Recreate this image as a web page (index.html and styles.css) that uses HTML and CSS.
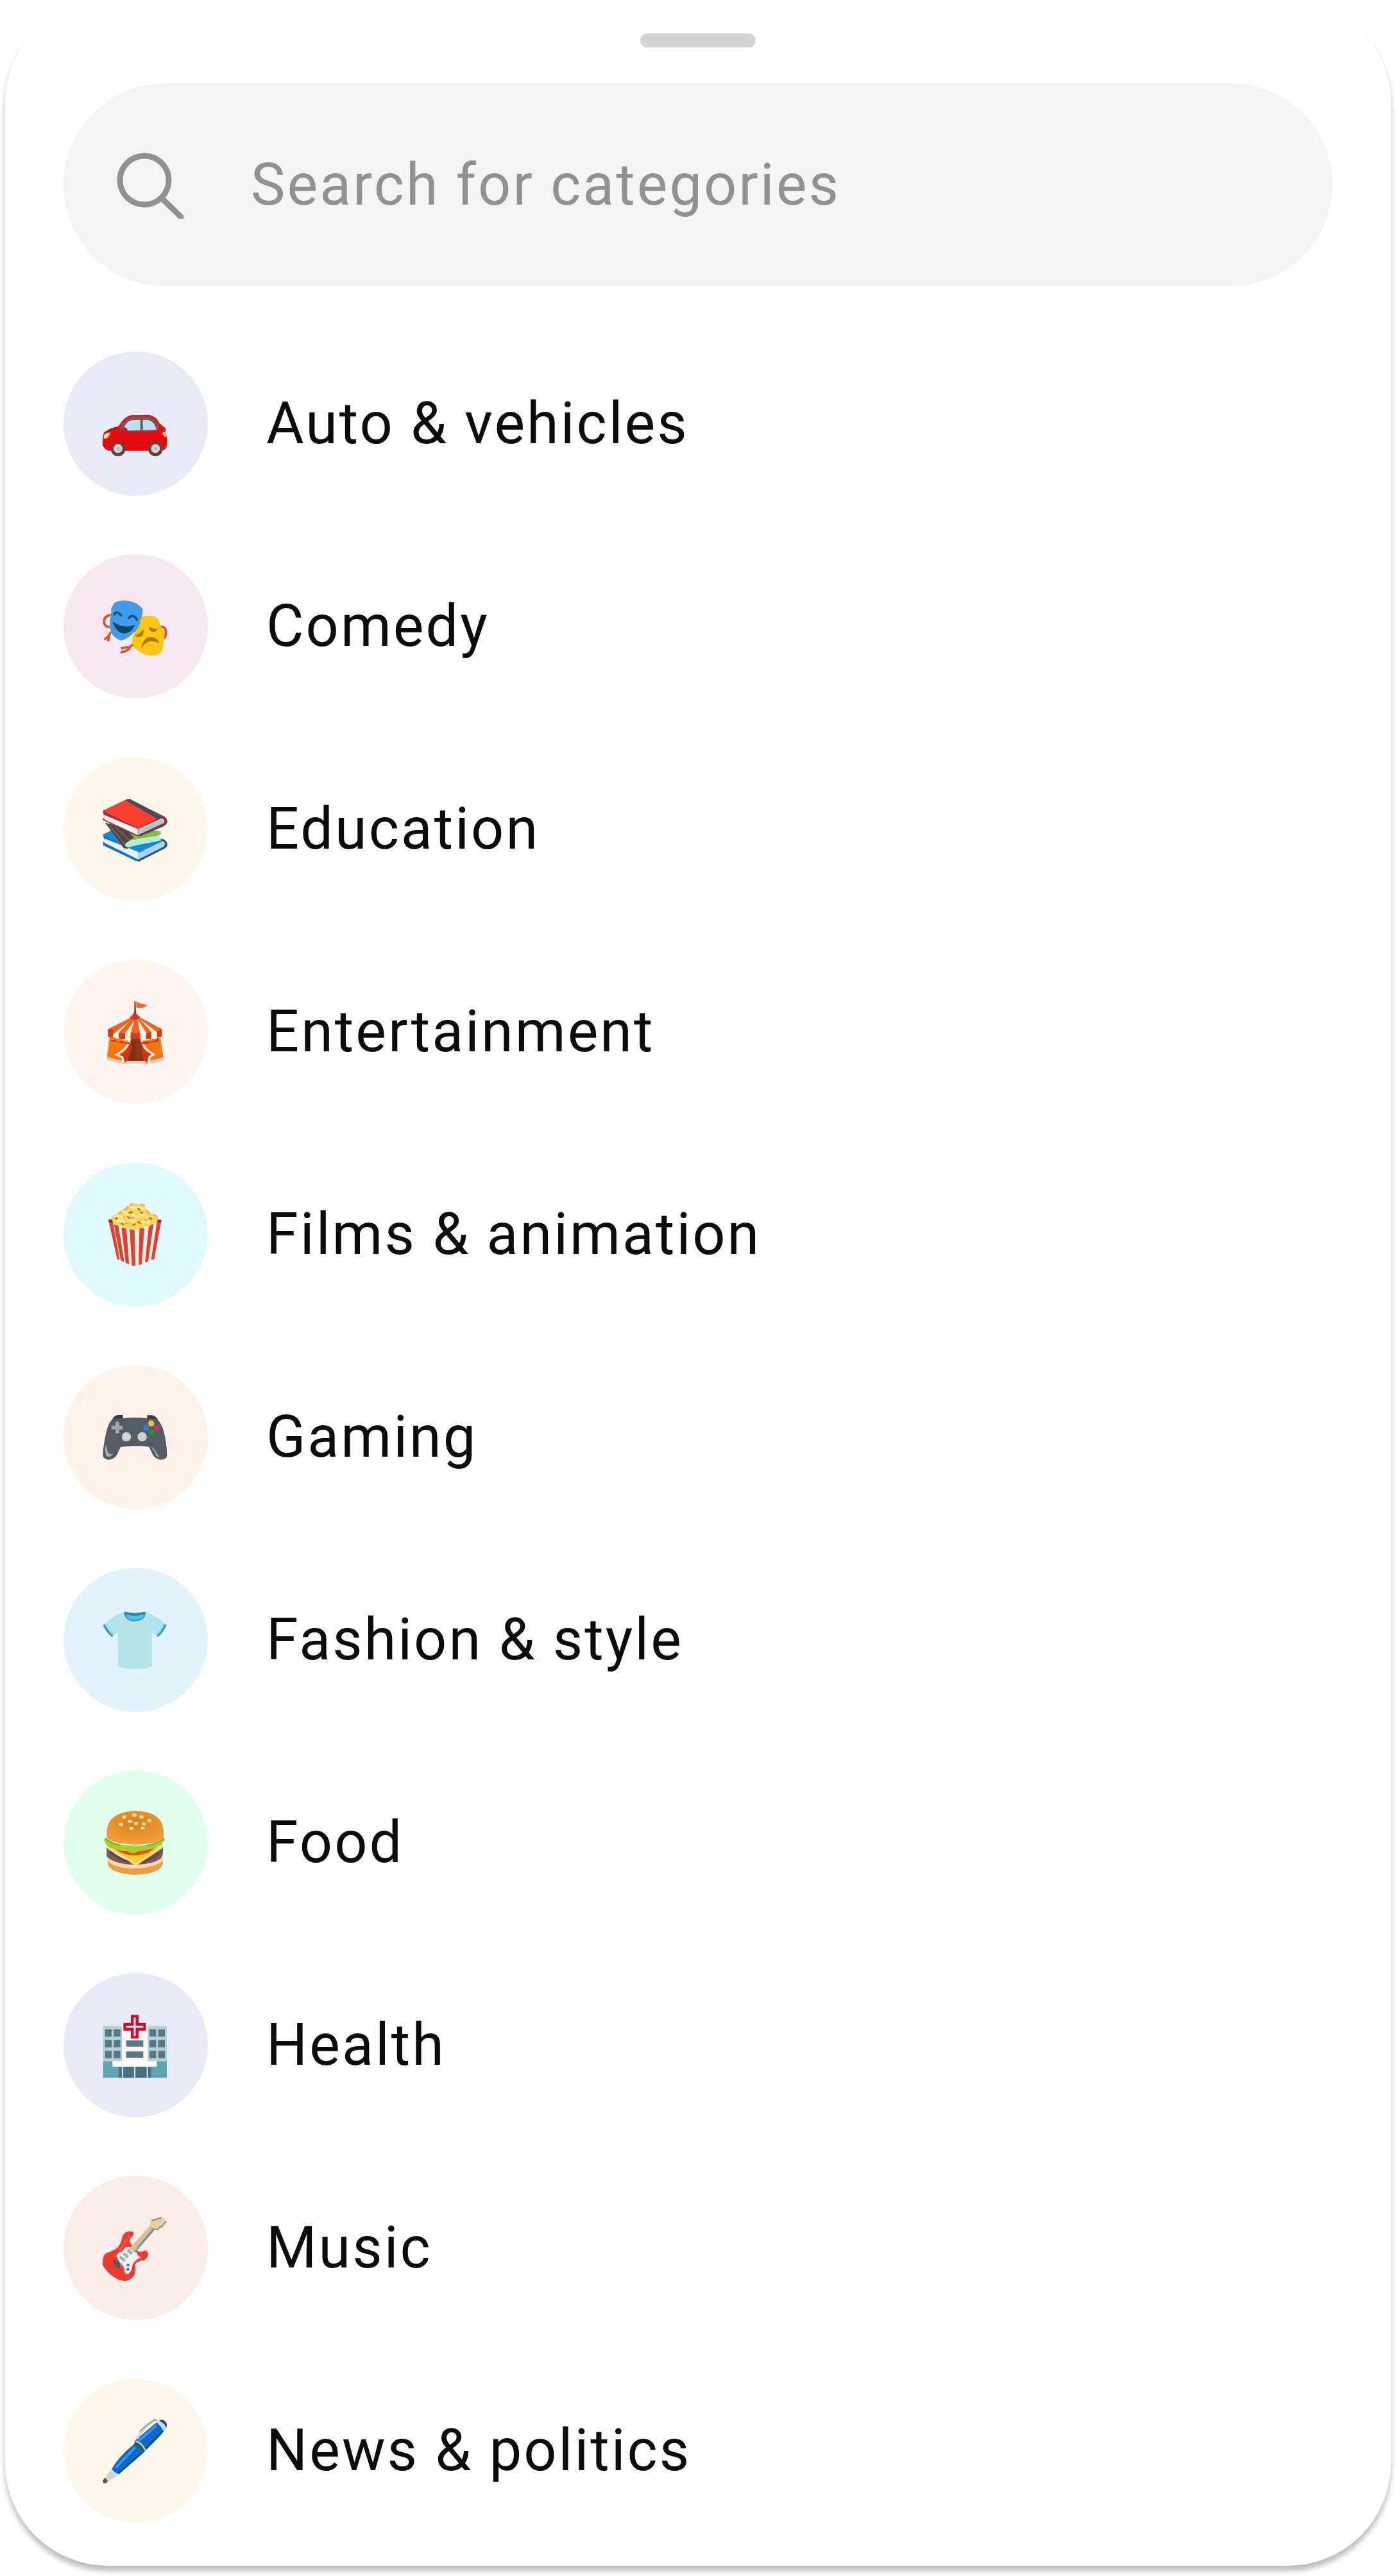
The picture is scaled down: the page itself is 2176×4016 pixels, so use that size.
FILE: index.html
```html
<!DOCTYPE html>
<html lang="en">
<head>
  <meta charset="UTF-8" />
  <meta name="viewport" content="width=device-width, initial-scale=1.0" />
  <title>Categories</title>
  <link rel="stylesheet" href="styles.css">
</head>
<body>

<main class="sheet">
  <div class="handle"></div>

  <label class="search">
    <svg class="search-icon" viewBox="0 0 106 106" aria-hidden="true">
      <circle cx="44" cy="46" r="38" />
      <path d="M71 74L101 103" />
    </svg>
    <input class="search-input" type="text" placeholder="Search for categories" aria-label="Search for categories" />
  </label>

  <ul class="categories">
    <li>
      <button class="category" type="button">
        <span class="icon auto">
          <svg viewBox="27 54 675 675" aria-hidden="true">
            <path d="M216 432Q250 411 286 403Q315 352 350 352L430 351Q464 360 476 390L505 413Q503 432 511 455Q514 485 506 508Q498 517 478 518L238 518Q216 512 210 490Q207 467 216 432Z" fill="#e60b10" />
            <path d="M289 410Q317 362 345 358L428 358Q461 365 473 398L468 425L300 429Z" fill="#924850" />
            <path d="M306 413Q323 382 343 376L386 374L386 422L320 424Z" fill="#b9e1f4" />
            <path d="M398 374L425 375Q453 382 461 419L398 422Z" fill="#b9e1f4" />
            <path d="M303 428L475 425" stroke="#ad3034" stroke-width="4" />
            <path d="M391 374V425" stroke="#44707f" stroke-width="7" />
            <path d="M216 435L246 414L284 408Q263 425 234 429Z" fill="#a51c20" />
            <path d="M475 390L505 414L490 421Z" fill="#a63434" />
            <ellipse cx="313" cy="423" rx="13" ry="14" fill="#c41c27" />
            <path d="M219 439L245 432Q244 454 222 463L214 459Z" fill="#ffd6ae" />
            <path d="M492 430L504 428L509 456Q496 453 489 439Z" fill="#ffba8b" />
            <path d="M218 474L246 482M210 491L248 504" stroke="#ba090e" stroke-width="5" />
            <circle cx="282" cy="510" r="34" fill="#5c433c" />
            <circle cx="457" cy="510" r="34" fill="#5c433c" />
            <circle cx="282" cy="508" r="21" fill="#d4cfd3" />
            <circle cx="457" cy="508" r="21" fill="#d4cfd3" />
            <circle cx="282" cy="508" r="7" fill="#bdb5bb" />
            <circle cx="457" cy="508" r="7" fill="#bdb5bb" />
          </svg>
        </span>
        <span class="name">Auto &amp; vehicles</span>
      </button>
    </li>
    <li>
      <button class="category" type="button">
        <span class="icon comedy">
          <svg viewBox="27 42 675 675" aria-hidden="true">
            <path d="M250 326Q215 330 217 361Q218 382 245 383M249 405Q239 428 218 441M241 415L236 449M480 383Q506 378 506 410Q506 425 494 439M354 464Q337 470 334 485Q320 497 294 502M336 478Q320 475 296 483" fill="none" stroke="#df5136" stroke-width="11" />
            <path d="M390 336Q435 319 470 345Q475 373 497 400Q504 422 488 491Q480 515 440 516Q389 512 362 482Q342 462 350 430Z" fill="#ffc513" />
            <path d="M264 270Q293 254 334 261Q374 268 397 298Q398 328 388 346Q384 391 350 414Q325 439 296 446Q274 439 257 420Q240 398 245 344Q252 321 250 296Z" fill="#409be8" />
            <path d="M262 328Q269 310 281 316Q293 319 296 333M330 344Q345 323 358 334Q369 338 370 354" fill="none" stroke="#144f78" stroke-width="10" />
            <path d="M257 357Q305 393 360 373Q346 411 309 413Q270 407 257 357Z" fill="#0d4769" />
            <path d="M425 379Q447 394 468 391Q460 408 443 405Q428 399 425 379ZM361 422Q388 413 400 393Q405 413 393 425Q379 434 361 422Z" fill="#a97702" />
            <path d="M390 483Q400 432 430 430Q466 427 476 461Q461 450 438 448Q412 450 390 483Z" fill="#a37a09" />
          </svg>
        </span>
        <span class="name">Comedy</span>
      </button>
    </li>
    <li>
      <button class="category" type="button">
        <span class="icon education">
          <svg viewBox="27 60 675 675" aria-hidden="true">
            <path d="M211 424L260 402L500 447Q514 466 500 485L380 548L365 547L213 474L211 455L222 463Z" fill="#1475bd" />
            <path d="M211 424L310 374L494 446L375 513Z" fill="#1389d9" />
            <path d="M218 441L377 505L377 540L220 463Z" fill="#e9eff9" />
            <path d="M377 509L496 451Q505 465 496 479L377 540Z" fill="#acd4eb" />
            <path d="M484 449Q509 453 509 470Q508 482 491 489L376 547" fill="none" stroke="#344d5d" stroke-width="7" />
            <path d="M222 369L250 373L481 409L481 422L330 488L311 488Z" fill="#77ab3c" />
            <path d="M222 368L290 388L362 431L334 450L326 486L309 487Z" fill="#554440" />
            <path d="M340 422L410 421L478 407L482 420L370 446Z" fill="#85bd40" />
            <path d="M336 450L476 426L483 451L325 482Q299 474 336 450Z" fill="#b9ead8" />
            <path d="M335 449Q308 455 310 477Q318 488 328 485" fill="none" stroke="#43514b" stroke-width="8" />
            <path d="M243 380L311 465M269 387L333 448" stroke="#83705e" stroke-width="4" />
            <path d="M211 313L325 257L339 258L500 340Q516 358 505 374L382 430L367 429L213 356L211 345L219 349Z" fill="#9d3038" />
            <path d="M211 312L317 262L467 349L375 395Z" fill="#f5402f" />
            <path d="M317 262L335 257L494 342L467 351Z" fill="#484b51" />
            <path d="M216 331L374 397L374 426L219 353Z" fill="#fbf2f7" />
            <path d="M376 397L488 346Q502 347 497 369L376 425Z" fill="#b5c6d0" />
            <path d="M485 344Q509 346 509 362Q508 374 492 382L384 428" fill="none" stroke="#4d474d" stroke-width="7" />
          </svg>
        </span>
        <span class="name">Education</span>
      </button>
    </li>
    <li>
      <button class="category" type="button">
        <span class="icon entertainment">
          <svg viewBox="27 48 675 675" aria-hidden="true">
            <path d="M239 413H481L496 515Q470 532 425 534L310 535Q261 529 229 517Z" fill="#d9cbbd" />
            <path d="M244 411H334L327 457L304 520Q260 515 231 501ZM388 411H478L494 503Q466 516 426 519Z" fill="#f77611" />
            <path d="M291 493L316 477Q341 446 341 393H386Q385 448 415 480L449 492L426 501L420 536L408 522H322L309 536L304 503Z" fill="#cf351e" />
            <path d="M342 395H382L390 455L402 520H328L345 459Z" fill="#8d3514" />
            <path d="M359 400L367 520H330L350 459Z" fill="#78370f" />
            <path d="M337 414Q337 458 275 493L302 504L309 532M390 412Q394 462 449 492L430 502L423 532" fill="none" stroke="#fff0dc" stroke-width="9" />
            <path d="M339 321L388 321L487 373V407Q480 417 466 413Q452 424 436 419Q421 430 389 426V382H340V425Q315 432 297 419Q280 424 264 411L236 409V373Z" fill="#fff3df" />
            <path d="M339 321L349 326L258 398V415L236 410V373ZM347 325L364 326L315 393V422L286 418V389ZM360 326H373L385 394V417H341V394ZM373 326L381 323L438 386V421L414 418V389ZM380 323L389 321L487 373V410L465 414V388Z" fill="#ec6421" />
            <path d="M241 413Q253 434 265 423Q282 440 297 428Q310 442 334 434V443L250 429ZM390 433Q404 438 419 430Q432 438 443 428Q456 432 470 414V430L395 444Z" fill="#c82420" />
            <path d="M235 375H259V409L236 411ZM286 390L315 394V421L286 417ZM343 390H382V419H342ZM414 392L438 388V418L414 420ZM465 383L487 375V408L465 412Z" fill="#c9401b" />
            <path d="M360 285Q370 309 388 319Q372 332 355 329Q341 326 336 319Q353 309 360 285Z" fill="#d9321d" />
            <path d="M364 242H358V296H367Z" fill="#944332" />
            <path d="M367 242Q382 255 399 255L419 262Q400 280 367 272Z" fill="#ee6a35" />
          </svg>
        </span>
        <span class="name">Entertainment</span>
      </button>
    </li>
    <li>
      <button class="category" type="button">
        <span class="icon films">
          <svg viewBox="27 36 675 675" aria-hidden="true">
            <path d="M237 304L486 306L447 488L357 521L281 494Z" fill="#fff3ec" />
            <path d="M237 305L256 306L290 493L278 490ZM263 328L284 332L311 502L295 496ZM298 341L321 345L334 513L318 507ZM336 350L359 353L364 521L347 520ZM382 346L405 343L393 514L378 516ZM426 333L448 323L423 500L408 504ZM465 307L485 305L451 491L437 490Z" fill="#dd4335" />
            <path d="M248 302Q254 279 281 277Q294 255 314 253Q326 233 342 239Q343 223 363 229Q381 235 392 229Q411 234 409 252Q428 256 429 277Q456 274 461 287L473 302Q456 314 456 322Q432 328 431 335Q407 332 401 345Q376 342 362 352Q345 347 332 352Q318 337 305 343Q297 326 279 332Q266 315 248 318Z" fill="#fbd35b" />
            <path d="M268 290Q282 282 296 292M300 268Q316 263 326 279M342 249Q360 242 372 256M281 312Q294 302 308 314M332 307Q350 302 360 317M383 287Q405 273 415 290M395 317Q414 306 426 318M377 247L400 253M351 283L370 292" fill="none" stroke="#ffe99b" stroke-width="12" stroke-linecap="round" />
            <path d="M335 272L347 269M328 292L336 298M375 253L383 258M389 270L396 273M376 316L387 321M298 323L307 326M271 298L278 299M352 329L362 325M430 298L438 301" stroke="#b8732c" stroke-width="8" stroke-linecap="round" />
            <path d="M313 258L329 246M338 236L347 230M390 234L405 238M415 264L431 277M284 277L298 270M450 281L464 289M345 300L357 294M319 321L333 321M406 303L417 309" stroke="#e9a83e" stroke-width="6" stroke-linecap="round" />
            <path d="M237 304H254L258 318H241ZM468 304L486 306L482 319L466 316Z" fill="#8e3433" />
          </svg>
        </span>
        <span class="name">Films &amp; animation</span>
      </button>
    </li>
    <li>
      <button class="category" type="button">
        <span class="icon gaming">
          <svg viewBox="27 54 675 675" aria-hidden="true">
            <path d="M252 316Q260 290 282 288H305V310H418V289H440Q463 292 472 318Z" fill="#353b40" />
            <path d="M249 316Q254 304 279 304H305Q361 296 419 304H445Q469 306 480 327Q495 349 503 397Q512 455 511 480Q506 497 480 497Q457 492 446 476L427 437Q361 428 294 438L275 477Q260 498 235 497Q212 494 211 474Q211 444 224 382Q234 332 249 316Z" fill="#545c63" />
            <path d="M279 320V375M251 347H304" stroke="#a2a7aa" stroke-width="17" />
            <circle cx="321" cy="390" r="22" fill="#c9cbce" />
            <circle cx="395" cy="390" r="22" fill="#c9cbce" />
            <circle cx="321" cy="390" r="15" fill="#d7d7da" />
            <circle cx="395" cy="390" r="15" fill="#d7cdd0" />
            <circle cx="437" cy="327" r="14" fill="#f5bb3d" />
            <circle cx="414" cy="348" r="14" fill="#347bd4" />
            <circle cx="461" cy="348" r="14" fill="#c8393d" />
            <circle cx="437" cy="370" r="14" fill="#159456" />
            <path d="M224 426Q218 461 228 479Q239 490 260 470Q242 475 235 463Q231 450 224 426ZM434 434Q455 459 460 477Q470 488 474 483Q465 471 455 452Q447 439 434 434Z" fill="#a9afb1" />
          </svg>
        </span>
        <span class="name">Gaming</span>
      </button>
    </li>
    <li>
      <button class="category" type="button">
        <span class="icon fashion">
          <svg viewBox="27 42 675 675" aria-hidden="true">
            <path d="M312 249Q360 264 410 249Q449 258 506 310Q496 343 468 365L441 344V505Q405 517 361 516Q313 516 281 505V345L253 364Q223 342 215 311Q264 261 312 249Z" fill="#b5e3e8" />
            <path d="M302 252Q248 274 221 304L258 355L281 344Q284 306 302 252ZM419 252Q467 271 501 304L465 355L441 344Q447 297 419 252Z" fill="#b1e4ec" />
            <path d="M313 252Q361 264 408 252Q407 287 361 290Q317 289 313 252Z" fill="#4bc5e4" stroke="#4599c1" stroke-width="7" />
            <path d="M315 254Q361 268 406 254" fill="none" stroke="#2789b4" stroke-width="12" />
            <path d="M216 308Q230 343 257 363M504 308Q491 342 465 363" fill="none" stroke="#4299c0" stroke-width="10" />
            <path d="M225 307Q237 337 261 354M496 307Q485 335 461 354" fill="none" stroke="#7dd7f3" stroke-width="6" />
          </svg>
        </span>
        <span class="name">Fashion &amp; style</span>
      </button>
    </li>
    <li>
      <button class="category" type="button">
        <span class="icon food">
          <svg viewBox="27 60 675 675" aria-hidden="true">
            <defs>
              <radialGradient id="bun" cx="50%" cy="35%" r="65%">
                <stop offset="0" stop-color="#d98017" />
                <stop offset="1" stop-color="#f0a03b" />
              </radialGradient>
            </defs>
            <path d="M233 470Q270 498 361 497Q456 497 492 468V493Q487 544 361 549Q239 543 233 493Z" fill="#e9a044" />
            <path d="M233 473Q270 510 361 511Q456 507 492 472" fill="none" stroke="#ffdab4" stroke-width="17" />
            <path d="M227 420Q250 444 356 500Q281 499 244 475Q221 465 230 444ZM491 418Q451 451 372 500Q441 499 480 474Q497 458 491 418Z" fill="#7c5753" />
            <path d="M244 441Q293 479 340 491M476 444Q433 477 388 492" fill="none" stroke="#5d4948" stroke-width="12" />
            <path d="M238 420L483 420L366 503Z" fill="#ffcc2e" />
            <path d="M236 421L366 500L487 419" fill="none" stroke="#ffdc8c" stroke-width="9" />
            <path d="M264 427Q352 454 455 422L427 442Q396 460 348 457Q307 456 264 427Z" fill="#e9501c" />
            <path d="M222 376Q213 389 223 398Q227 421 262 425Q278 440 301 431Q322 431 340 446Q359 453 376 439Q415 434 429 425Q452 429 464 416Q492 417 489 396Q504 391 498 376Q438 416 361 412Q275 413 222 376Z" fill="#a6cf27" />
            <path d="M222 379Q250 404 291 409M498 379Q465 405 414 412" stroke="#78ae42" stroke-width="6" fill="none" />
            <path d="M229 378V345Q234 256 361 249Q491 253 495 343V378Q463 406 361 407Q267 405 229 378Z" fill="url(#bun)" />
            <g fill="#ffe2b4">
              <ellipse cx="311" cy="279" rx="10" ry="8" /><ellipse cx="358" cy="269" rx="11" ry="7" />
              <ellipse cx="391" cy="278" rx="10" ry="8" /><ellipse cx="428" cy="294" rx="10" ry="7" />
              <ellipse cx="338" cy="299" rx="10" ry="7" /><ellipse cx="366" cy="308" rx="9" ry="8" />
              <ellipse cx="403" cy="310" rx="9" ry="7" /><ellipse cx="296" cy="313" rx="10" ry="8" />
              <ellipse cx="344" cy="331" rx="9" ry="8" /><ellipse cx="397" cy="330" rx="10" ry="6" />
            </g>
          </svg>
        </span>
        <span class="name">Food</span>
      </button>
    </li>
    <li>
      <button class="category" type="button">
        <span class="icon health">
          <svg viewBox="27 48 675 675" aria-hidden="true">
            <path d="M212 296H510V462H212Z" fill="#b3cfd6" />
            <path d="M212 461H510V538H212Z" fill="#5ba4b0" />
            <path d="M300 279H421V462H300Z" fill="#f8f5f7" />
            <path d="M285 480H436V538H285Z" fill="#487281" />
            <path d="M221 311H252V345H221ZM262 311H293V345H262ZM221 361H252V395H221ZM262 361H293V395H262ZM221 412H252V446H221ZM262 412H293V446H262ZM429 311H460V345H429ZM470 311H501V345H470ZM429 361H460V395H429ZM470 361H501V395H470ZM429 412H460V446H429ZM470 412H501V446H470Z" fill="#567984" />
            <path d="M320 363H400V392H320ZM320 415H400V444H320Z" fill="#5b7983" />
            <path d="M256 460H463V486H256Z" fill="#fff" />
            <path d="M303 486V538M360 486V538M419 486V538" stroke="#c4d9de" stroke-width="7" />
            <path d="M342 244H378V281H412V317H378V354H342V317H307V281H342Z" fill="#c90b2e" />
            <path d="M360 256V343M319 299H400" stroke="#ffe9ef" stroke-width="9" />
          </svg>
        </span>
        <span class="name">Health</span>
      </button>
    </li>
    <li>
      <button class="category" type="button">
        <span class="icon music">
          <svg viewBox="27 66 675 675" aria-hidden="true">
            <path d="M355 330Q335 321 315 333Q299 347 298 371Q287 399 271 409Q251 421 230 427Q207 438 211 475Q220 501 249 527Q286 558 322 554Q350 545 359 521Q366 500 362 482Q370 465 397 462Q421 448 421 425Q413 409 398 419Q380 430 370 410Q370 398 357 396L343 387Q326 365 351 349Q357 339 355 330Z" fill="#f23b30" />
            <path d="M211 475Q221 501 250 526Q286 557 322 554Q350 545 359 521M421 427Q420 449 397 461" fill="none" stroke="#ce4038" stroke-width="7" />
            <path d="M314 402Q339 392 348 407L370 426Q377 447 391 448Q366 456 350 481Q350 506 333 524Q316 530 312 515Q315 493 291 473L274 442Q278 425 296 422Q306 418 314 402Z" fill="#f4eeed" />
            <path d="M333 409L431 300L450 309L359 425Z" fill="#d3c19c" />
            <path d="M359 424L453 315M451 310L374 401" stroke="#7e9585" stroke-width="6" />
            <path d="M428 299L439 273L487 260L499 263L500 273L510 276L500 287L492 291L488 301L476 305L470 315L454 315Z" fill="#e3cfa4" />
            <path d="M437 276L484 263M454 315L468 318L476 307L488 304L493 294L508 280" fill="none" stroke="#877f6d" stroke-width="5" />
            <path d="M327 414L347 430M308 430L328 447M291 445L313 464" stroke="#8eaab0" stroke-width="12" />
            <path d="M254 462L270 458L302 484L287 498L274 495Z" fill="#545b5e" />
            <path d="M292 489L302 470M310 450L332 423" stroke="#b9c6c9" stroke-width="4" />
            <circle cx="329" cy="484" r="7" fill="#458485" />
            <circle cx="328" cy="504" r="7" fill="#458485" />
            <path d="M335 346L313 380L289 417" stroke="#ff5b49" stroke-width="7" fill="none" />
          </svg>
        </span>
        <span class="name">Music</span>
      </button>
    </li>
    <li>
      <button class="category" type="button">
        <span class="icon news">
          <svg viewBox="297 54 675 675" aria-hidden="true">
            <path d="M482 528L516 485L535 478L559 500L502 540L486 546Q479 540 482 528Z" fill="#d4d5d5" />
            <path d="M482 529L490 519L504 531L500 541L486 546Q479 540 482 529Z" fill="#66554f" />
            <path d="M516 486L526 475L565 497L550 505Z" fill="#c9e7fa" />
            <path d="M635 341L735 257L779 282Q763 309 718 354L668 404L556 502Q535 496 522 478Q553 422 625 363Z" fill="#0c69ca" />
            <path d="M648 347L731 274M541 472L633 374" stroke="#3f91e8" stroke-width="12" />
            <path d="M673 386Q727 338 760 301M555 498L667 399" stroke="#0b4389" stroke-width="6" fill="none" />
            <path d="M628 369L639 344Q668 355 687 383L670 399Q657 378 628 369Z" fill="#235c68" />
            <path d="M636 347Q665 357 680 391" fill="none" stroke="#c1d98b" stroke-width="8" />
            <path d="M730 259L745 249Q773 266 777 287L765 301Q753 275 730 259Z" fill="#c2ddf6" />
            <path d="M744 251Q758 243 769 252Q785 263 778 283Q769 265 744 251Z" fill="#254b99" />
            <path d="M640 336Q668 282 722 249" fill="none" stroke="#ccd9e1" stroke-width="13" />
            <path d="M654 301Q686 270 726 247L735 251" fill="none" stroke="#a19b91" stroke-width="6" />
          </svg>
        </span>
        <span class="name">News &amp; politics</span>
      </button>
    </li>
  </ul>
</main>

</body>
</html>
```
FILE: styles.css
```css
* {
  box-sizing: border-box;
}
body {
  margin: 0;
  padding: 0 8px 16px;
  background: #fff;
  font-family: Roboto, sans-serif;
  overflow-x: hidden;
}
.sheet {
  display: flex;
  flex-direction: column;
  padding: 52px 91px 67px;
  border-radius: 160px;
  background: #fff;
  box-shadow: 0 8px 8px rgba(0, 0, 0, 0.27);
}
.handle {
  width: 180px;
  height: 22px;
  margin: 0 auto 56px;
  border-radius: 11px;
  background: #d5d5d5;
}
.search {
  display: flex;
  align-items: center;
  gap: 104px;
  padding: 105px 82px;
  border-radius: 160px;
  background: #f4f4f4;
}
.search-icon {
  flex: none;
  width: 106px;
  height: 106px;
  fill: none;
  stroke: #919191;
  stroke-width: 9;
  stroke-linecap: round;
}
.search-input {
  flex: 1;
  min-width: 0;
  height: 105px;
  padding: 0;
  border: none;
  outline: none;
  background: transparent;
  color: #000;
  font: inherit;
  font-size: 90px;
  letter-spacing: 3px;
}
.search-input::placeholder {
  color: #919191;
  opacity: 1;
}
.categories {
  display: flex;
  flex-direction: column;
  gap: 91px;
  margin: 102px 0 0;
  padding: 0;
  list-style: none;
}
.category {
  display: flex;
  align-items: center;
  gap: 91px;
  width: 100%;
  padding: 0;
  border: none;
  background: none;
  color: #0b0b0b;
  font: inherit;
  font-size: 90px;
  letter-spacing: 3px;
  text-align: left;
  cursor: pointer;
}
.icon {
  flex: none;
  width: 225px;
  height: 225px;
  border-radius: 50%;
}
.icon svg {
  display: block;
  width: 100%;
  height: 100%;
}
.auto,
.health {
  background: #e8ebf7;
}
.comedy {
  background: #f7e7ef;
}
.education,
.news {
  background: #fef8ea;
}
.entertainment {
  background: #fef5f3;
}
.films {
  background: #e0f9ff;
}
.gaming {
  background: #fff2ea;
}
.fashion {
  background: #e1f3fd;
}
.food {
  background: #e0ffee;
}
.music {
  background: #faece8;
}
```
